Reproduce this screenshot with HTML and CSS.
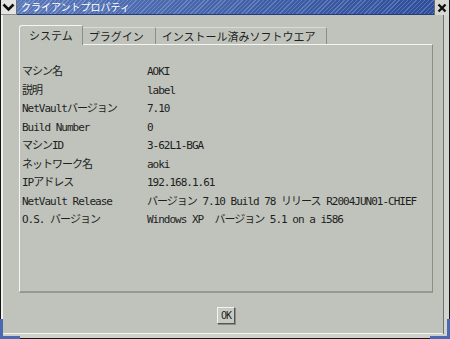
FILE: index.html
```html
<!DOCTYPE html>
<html>
	<head>
		<meta charset="UTF-8">
		<title>クライアントプロパティ</title>
		<link rel="stylesheet" href="styles.css">
	</head>
	<body>
		<div class="window">
			<!--タイトルバー-->
			<div class="titlebar">
				<div class="menu-btn">
					<svg width="15" height="14" viewBox="0 0 15 14"><path d="M2.5 4.5 L7.5 9.5 L12.5 4.5" fill="none" stroke="#111" stroke-width="2.6"/></svg>
				</div>
				<div class="title">クライアントプロパティ</div>
				<div class="close-btn">
					<svg width="14" height="14" viewBox="0 0 14 14"><path d="M3.5 3.5 L10.5 10.5 M10.5 3.5 L3.5 10.5" stroke="#111" stroke-width="2.4"/></svg>
				</div>
			</div>
			<div class="client">
				<!--タブ-->
				<div class="tabs">
					<div class="tab active">システム</div>
					<div class="tab">プラグイン</div>
					<div class="tab">インストール済みソフトウエア</div>
				</div>
				<div class="panel">
					<dl class="info">
						<dt>マシン名</dt><dd>AOKI</dd>
						<dt>説明</dt><dd>label</dd>
						<dt>NetVaultバージョン</dt><dd>7.10</dd>
						<dt>Build Number</dt><dd>0</dd>
						<dt>マシンID</dt><dd>3-62L1-BGA</dd>
						<dt>ネットワーク名</dt><dd>aoki</dd>
						<dt>IPアドレス</dt><dd>192.168.1.61</dd>
						<dt>NetVault Release</dt><dd>バージョン 7.10 Build 78 リリース R2004JUN01-CHIEF</dd>
						<dt>O.S. バージョン</dt><dd>Windows XP &nbsp;バージョン 5.1 on a i586</dd>
					</dl>
				</div>
				<div class="buttons">
					<button class="btn">OK</button>
				</div>
			</div>
		</div>
	</body>
</html>
```

FILE: styles.css
```css
*{
	margin: 0;
	padding: 0;
	box-sizing: border-box;
}
body{
	width: 450px;
	height: 339px;
	overflow: hidden;
	background: #bfc3bb;
	font-family: "DejaVu Sans Mono", "Noto Sans CJK JP", monospace;
	color: #1e1e1e;
}
.window{
	position: relative;
	width: 450px;
	height: 339px;
	display: flex;
	flex-direction: column;
	background: #bfc3bb;
	border: 1px solid #151515;
	border-top: 0;
}
/* 角のリサイズハンドル */
.window::before,.window::after{
	content: "";
	position: absolute;
	bottom: -1px;
	width: 17px;
	height: 17px;
	border-bottom: 3px solid #4b69b1;
}
.window::before{
	left: -1px;
	border-left: 3px solid #4b69b1;
}
.window::after{
	right: -1px;
	border-right: 3px solid #4b69b1;
}
.titlebar{
	display: flex;
	height: 15px;
}
.menu-btn{
	width: 16px;
	background: #e4e5e1;
	border-right: 1px solid #6d706b;
	border-bottom: 1px solid #8d908b;
	display: flex;
	align-items: center;
	justify-content: center;
}
.title{
	flex: 1;
	padding-left: 4px;
	font-family: "Noto Sans CJK JP", sans-serif;
	font-size: 10px;
	line-height: 14px;
	color: #fff;
	background:
		repeating-linear-gradient(135deg, rgba(255,255,255,0.2) 0 1px, transparent 1px 3px),
		linear-gradient(to right, #5877b9, #2e4e9c);
	border-bottom: 1px solid #223c7c;
}
.close-btn{
	width: 15px;
	background: #d6d8d3;
	border-left: 1px solid #6d706b;
	display: flex;
	align-items: center;
	justify-content: center;
}
.client{
	flex: 1;
	display: flex;
	flex-direction: column;
	padding: 10px 11px 0 16px;
	border-left: 2px solid #f2f3f0;
	border-right: 5px solid #d2d5cf;
	border-bottom: 4px solid #cfd2cc;
	box-shadow: inset -1px 0 0 #6f726d, inset 0 -1px 0 #f2f3f0;
}
.tabs{
	display: flex;
	align-items: flex-end;
	height: 19px;
	font-family: "Noto Sans CJK JP", sans-serif;
	font-size: 11px;
}
.tab{
	height: 17px;
	line-height: 16px;
	padding: 0 11px 0 6px;
	border-top: 1px solid #d9dbd6;
	border-right: 1px solid #8a8d88;
	border-top-right-radius: 2px;
}
.tab.active{
	position: relative;
	z-index: 1;
	height: 20px;
	line-height: 18px;
	margin-bottom: -1px;
	padding: 0 9px 0 9px;
	background: #bfc3bb;
	border-left: 1px solid #f4f5f2;
	border-top: 1px solid #f4f5f2;
	border-top-left-radius: 3px;
}
.panel{
	height: 249px;
	padding: 18px 0 0 2px;
	border: 1px solid #f4f5f2;
	border-right-color: #8a8d88;
	border-bottom: 2px solid #959893;
}
.info{
	display: grid;
	grid-template-columns: 125px 1fr;
	font-size: 11px;
	letter-spacing: -1px;
	line-height: 18.5px;
	white-space: nowrap;
}
.buttons{
	display: flex;
	justify-content: center;
	margin-top: 14px;
}
.btn{
	width: 18px;
	height: 17px;
	font-family: "DejaVu Sans Mono", monospace;
	font-size: 10px;
	letter-spacing: -1px;
	color: #1e1e1e;
	background: #c8cbc5;
	border: 1px solid;
	border-color: #f4f5f2 #55574f #55574f #f4f5f2;
	box-shadow: 1px 1px 0 #8a8d88;
}
```
